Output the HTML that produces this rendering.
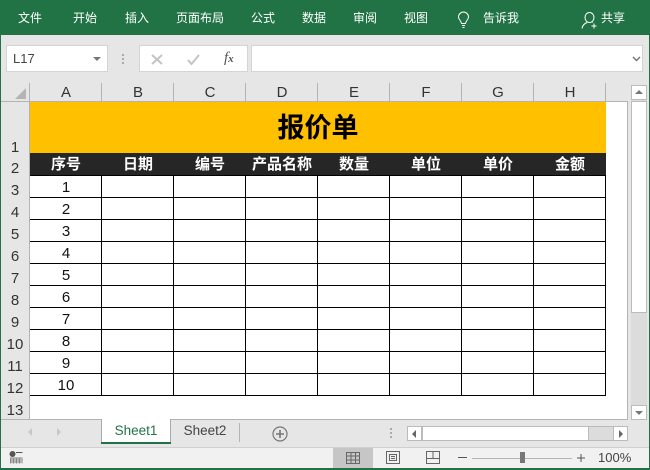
<!DOCTYPE html>
<html><head><meta charset="utf-8"><style>
html,body{margin:0;padding:0}
*{box-sizing:border-box}
body{width:650px;height:470px;overflow:hidden;position:relative;background:#e6e6e6;font-family:"Liberation Sans","Noto Sans CJK SC",sans-serif;}
.a{position:absolute}
.m{position:absolute;top:10px;color:#fff;font-size:12px;line-height:17px;white-space:nowrap}
.c{position:absolute;top:83px;height:20px;width:72px;text-align:center;font-size:15px;line-height:20px;color:#333}
.s{position:absolute;background:#b4b4b4}
.r{position:absolute;left:1px;width:28px;text-align:center;font-size:15px;line-height:18px;color:#333}
.h{position:absolute;top:153px;height:23px;width:72px;text-align:center;color:#fff;font-weight:bold;font-size:15px;line-height:23px;white-space:nowrap}
.n{position:absolute;left:30px;width:72px;text-align:center;color:#111;font-size:15px;line-height:21px}
.k{position:absolute;background:#000}
</style></head><body>
<div class="a" style="left:0;top:0;width:650px;height:35px;background:#217346"></div>
<div class="m" style="left:18px">文件</div>
<div class="m" style="left:73px">开始</div>
<div class="m" style="left:125px">插入</div>
<div class="m" style="left:176px">页面布局</div>
<div class="m" style="left:251px">公式</div>
<div class="m" style="left:302px">数据</div>
<div class="m" style="left:353px">审阅</div>
<div class="m" style="left:404px">视图</div>
<div class="m" style="left:483px">告诉我</div>
<div class="m" style="left:601px">共享</div>
<svg class="a" style="left:456px;top:11px" width="16" height="18" fill="none" stroke="#fff" stroke-width="1"><path d="M5.500 12.500C5 9.500 2.500 8.500 2.500 6A5 5 0 0 1 12.500 6C12.500 8.500 10 9.500 9.500 12.500Z"/><path d="M6 14.500H9M6.500 16.500H8.500"/></svg>
<svg class="a" style="left:581px;top:12px" width="17" height="17" fill="none" stroke="#fff" stroke-width="1"><ellipse cx="8.500" cy="5.500" rx="4.500" ry="5"/><path d="M1 16.500C1.500 13.500 3.500 11.500 6 10.500M11 10.500H11.500M13 11.500V16.500M10.500 14H15.500"/></svg>

<div class="a" style="left:6px;top:45px;width:102px;height:27px;background:#fff;box-shadow:0 0 0 1px #d4d4d4 inset"></div>
<div class="a" style="left:13px;top:51px;font-size:13px;line-height:16px;color:#444">L17</div>
<div class="a" style="left:93px;top:57px;width:0;height:0;border:4px solid transparent;border-top:4px solid #777;border-bottom:0"></div>
<div class="a" style="left:122px;top:54px;width:2px;height:2px;background:#aaa;box-shadow:0 4px #aaa,0 8px #aaa"></div>
<div class="a" style="left:139px;top:45px;width:109px;height:27px;background:#fff;box-shadow:0 0 0 1px #d4d4d4 inset"></div>
<svg class="a" style="left:150px;top:52px" width="50" height="14" fill="none" stroke="#c4c4c4" stroke-width="2"><path d="M2 3L12 12M12 3L2 12M38 8L41.500 12L49 3"/></svg>
<div class="a" style="left:224px;top:50px;font:italic 15px/16px 'Liberation Serif',serif;color:#555">f<span style="font-size:11px;font-weight:bold">x</span></div>
<div class="a" style="left:251px;top:45px;width:392px;height:27px;background:#fff;box-shadow:0 0 0 1px #d4d4d4 inset"></div>
<svg class="a" style="left:632px;top:56px" width="9" height="6" fill="none" stroke="#777" stroke-width="1.500"><path d="M1 1L4.500 4.500L8 1"/></svg>

<div class="a" style="left:1px;top:81px;width:604px;height:20px;background:#e6e6e6"></div>
<div class="a" style="left:1px;top:101px;width:29px;height:318px;background:#e6e6e6"></div>
<div class="a" style="left:15px;top:88px;width:0;height:0;border-style:solid;border-width:0 0 11px 11px;border-color:transparent transparent #b4b4b4 transparent"></div>
<div class="a" style="left:30px;top:101px;width:597px;height:318px;background:#fff"></div>
<div class="s" style="left:0;top:101px;width:628px;height:1px"></div>
<div class="s" style="left:29px;top:83px;width:1px;height:336px"></div>
<div class="s" style="left:627px;top:101px;width:1px;height:318px"></div>
<div class="s" style="left:0;top:419px;width:628px;height:1px"></div>
<div class="s" style="left:101px;top:83px;width:1px;height:18px"></div>
<div class="s" style="left:173px;top:83px;width:1px;height:18px"></div>
<div class="s" style="left:245px;top:83px;width:1px;height:18px"></div>
<div class="s" style="left:317px;top:83px;width:1px;height:18px"></div>
<div class="s" style="left:389px;top:83px;width:1px;height:18px"></div>
<div class="s" style="left:461px;top:83px;width:1px;height:18px"></div>
<div class="s" style="left:533px;top:83px;width:1px;height:18px"></div>
<div class="s" style="left:605px;top:83px;width:1px;height:18px"></div>
<div class="c" style="left:30px">A</div><div class="c" style="left:102px">B</div><div class="c" style="left:174px">C</div><div class="c" style="left:246px">D</div><div class="c" style="left:318px">E</div><div class="c" style="left:390px">F</div><div class="c" style="left:462px">G</div><div class="c" style="left:534px">H</div>

<div class="r" style="top:139px">1</div><div class="r" style="top:160px">2</div><div class="r" style="top:182px">3</div><div class="r" style="top:204px">4</div><div class="r" style="top:226px">5</div><div class="r" style="top:248px">6</div><div class="r" style="top:270px">7</div><div class="r" style="top:292px">8</div><div class="r" style="top:314px">9</div><div class="r" style="top:336px">10</div><div class="r" style="top:358px">11</div><div class="r" style="top:380px">12</div><div class="r" style="top:402px">13</div>

<div class="a" style="left:30px;top:102px;width:576px;height:51px;background:#ffc000;text-align:center;font-size:27px;font-weight:bold;line-height:52px;color:#000">报价单</div>
<div class="a" style="left:30px;top:153px;width:576px;height:23px;background:#262626"></div>
<div class="h" style="left:30px">序号</div><div class="h" style="left:102px">日期</div><div class="h" style="left:174px">编号</div><div class="h" style="left:246px">产品名称</div><div class="h" style="left:318px">数量</div><div class="h" style="left:390px">单位</div><div class="h" style="left:462px">单价</div><div class="h" style="left:534px">金额</div>

<div class="k" style="left:30px;top:175px;width:576px;height:1px"></div>
<div class="k" style="left:30px;top:197px;width:576px;height:1px"></div>
<div class="k" style="left:30px;top:219px;width:576px;height:1px"></div>
<div class="k" style="left:30px;top:241px;width:576px;height:1px"></div>
<div class="k" style="left:30px;top:263px;width:576px;height:1px"></div>
<div class="k" style="left:30px;top:285px;width:576px;height:1px"></div>
<div class="k" style="left:30px;top:307px;width:576px;height:1px"></div>
<div class="k" style="left:30px;top:329px;width:576px;height:1px"></div>
<div class="k" style="left:30px;top:351px;width:576px;height:1px"></div>
<div class="k" style="left:30px;top:373px;width:576px;height:1px"></div>
<div class="k" style="left:30px;top:395px;width:576px;height:1px"></div>
<div class="k" style="left:101px;top:176px;width:1px;height:220px"></div>
<div class="k" style="left:173px;top:176px;width:1px;height:220px"></div>
<div class="k" style="left:245px;top:176px;width:1px;height:220px"></div>
<div class="k" style="left:317px;top:176px;width:1px;height:220px"></div>
<div class="k" style="left:389px;top:176px;width:1px;height:220px"></div>
<div class="k" style="left:461px;top:176px;width:1px;height:220px"></div>
<div class="k" style="left:533px;top:176px;width:1px;height:220px"></div>
<div class="k" style="left:605px;top:176px;width:1px;height:220px"></div>
<div class="n" style="top:176px"><span style="position:relative;top:1px">1</span></div><div class="n" style="top:198px"><span style="position:relative;top:1px">2</span></div><div class="n" style="top:220px"><span style="position:relative;top:1px">3</span></div><div class="n" style="top:242px"><span style="position:relative;top:1px">4</span></div><div class="n" style="top:264px"><span style="position:relative;top:1px">5</span></div><div class="n" style="top:286px"><span style="position:relative;top:1px">6</span></div><div class="n" style="top:308px"><span style="position:relative;top:1px">7</span></div><div class="n" style="top:330px"><span style="position:relative;top:1px">8</span></div><div class="n" style="top:352px"><span style="position:relative;top:1px">9</span></div><div class="n" style="top:374px"><span style="position:relative;top:1px">10</span></div>

<div class="a" style="left:631px;top:85px;width:16px;height:335px;background:#dcdcdc"></div>
<div class="a" style="left:631px;top:85px;width:16px;height:15px;background:#fff;border:1px solid #bbb"></div>
<div class="a" style="left:635px;top:90px;width:0;height:0;border:4px solid transparent;border-bottom:4px solid #777;border-top:0"></div>
<div class="a" style="left:631px;top:101px;width:16px;height:212px;background:#fff;border:1px solid #bbb"></div>
<div class="a" style="left:631px;top:405px;width:16px;height:15px;background:#fff;border:1px solid #bbb"></div>
<div class="a" style="left:635px;top:411px;width:0;height:0;border:4px solid transparent;border-top:4px solid #777;border-bottom:0"></div>

<div class="a" style="left:0;top:447px;width:650px;height:21px;background:#f1f1f1"></div>
<div class="a" style="left:0;top:447px;width:650px;height:1px;background:#d0d0d0"></div>
<div class="a" style="left:28px;top:428px;width:0;height:0;border:4px solid transparent;border-right:4px solid #c8c8c8;border-left:0"></div>
<div class="a" style="left:57px;top:428px;width:0;height:0;border:4px solid transparent;border-left:4px solid #c8c8c8;border-right:0"></div>
<div class="a" style="left:101px;top:419px;width:70px;height:25px;background:#fff;border-right:1px solid #aaa;border-left:1px solid #aaa;text-align:center;font-size:13.500px;line-height:24px;color:#217346">Sheet1</div>
<div class="a" style="left:101px;top:442px;width:70px;height:2px;background:#217346"></div>
<div class="a" style="left:171px;top:419px;width:68px;height:25px;text-align:center;font-size:13.500px;line-height:24px;color:#444">Sheet2</div>
<div class="a" style="left:239px;top:423px;width:1px;height:19px;background:#b4b4b4"></div>
<svg class="a" style="left:272px;top:426px" width="16" height="16" fill="none" stroke="#777" stroke-width="1.200"><circle cx="8" cy="8" r="7"/><path stroke-width="1.600" d="M8 4V12M4 8H12"/></svg>
<div class="a" style="left:390px;top:428px;width:2px;height:2px;background:#aaa;box-shadow:0 4px #aaa,0 8px #aaa"></div>
<div class="a" style="left:407px;top:426px;width:221px;height:15px;background:#dcdcdc;border:1px solid #bbb"></div>
<div class="a" style="left:407px;top:426px;width:15px;height:15px;background:#fff;border:1px solid #bbb"></div>
<div class="a" style="left:412px;top:430px;width:0;height:0;border:4px solid transparent;border-right:4px solid #666;border-left:0"></div>
<div class="a" style="left:422px;top:426px;width:167px;height:15px;background:#fff;border:1px solid #bbb"></div>
<div class="a" style="left:613px;top:426px;width:15px;height:15px;background:#fff;border:1px solid #bbb"></div>
<div class="a" style="left:619px;top:430px;width:0;height:0;border:4px solid transparent;border-left:4px solid #666;border-right:0"></div>

<svg class="a" style="left:9px;top:451px" width="14" height="13"><circle cx="3.500" cy="3" r="3" fill="#555"/><path d="M7 1.500H13.500" stroke="#555" fill="none"/><path d="M1 6.500H13.500V12.500H1Z" fill="#888"/><path d="M2 8H13M2 10H13M2 12H13" stroke="#fff" stroke-dasharray="2 1" stroke-width=".7"/></svg>
<div class="a" style="left:333px;top:448px;width:40px;height:20px;background:#c6c6c6"></div>
<svg class="a" style="left:346px;top:452px" width="14" height="12" fill="none" stroke="#666"><path d="M.5 .5H13.500V11.500H.5ZM.5 4H13.500M.5 8H13.500M5 .5V11.500M9.500 .5V11.500"/></svg>
<svg class="a" style="left:386px;top:451px" width="14" height="13" fill="none" stroke="#666"><path d="M.5 .5H13.500V12.500H.5ZM3.500 3.500H10.500V9.500H3.500ZM5 5.500H9M5 7.500H9"/></svg>
<svg class="a" style="left:426px;top:451px" width="14" height="13" fill="none" stroke="#666"><path d="M.5 .5H13.500V12.500H.5ZM.5 7.500H13.500M7 .5V7.500"/></svg>
<div class="a" style="left:458px;top:457px;width:9px;height:1px;background:#555"></div>
<div class="a" style="left:472px;top:458px;width:100px;height:1px;background:#b4b4b4"></div>
<div class="a" style="left:520px;top:452px;width:5px;height:11px;background:#777"></div>
<svg class="a" style="left:576px;top:453px" width="10" height="10" stroke="#555"><path d="M5 1V9M1 5H9"/></svg>
<div class="a" style="left:598px;top:450px;font-size:13px;line-height:16px;color:#444">100%</div>

<div class="a" style="left:0;top:35px;width:1px;height:435px;background:#217346"></div>
<div class="a" style="left:649px;top:35px;width:1px;height:435px;background:#217346"></div>
<div class="a" style="left:0;top:468px;width:650px;height:2px;background:#217346"></div>
</body></html>
